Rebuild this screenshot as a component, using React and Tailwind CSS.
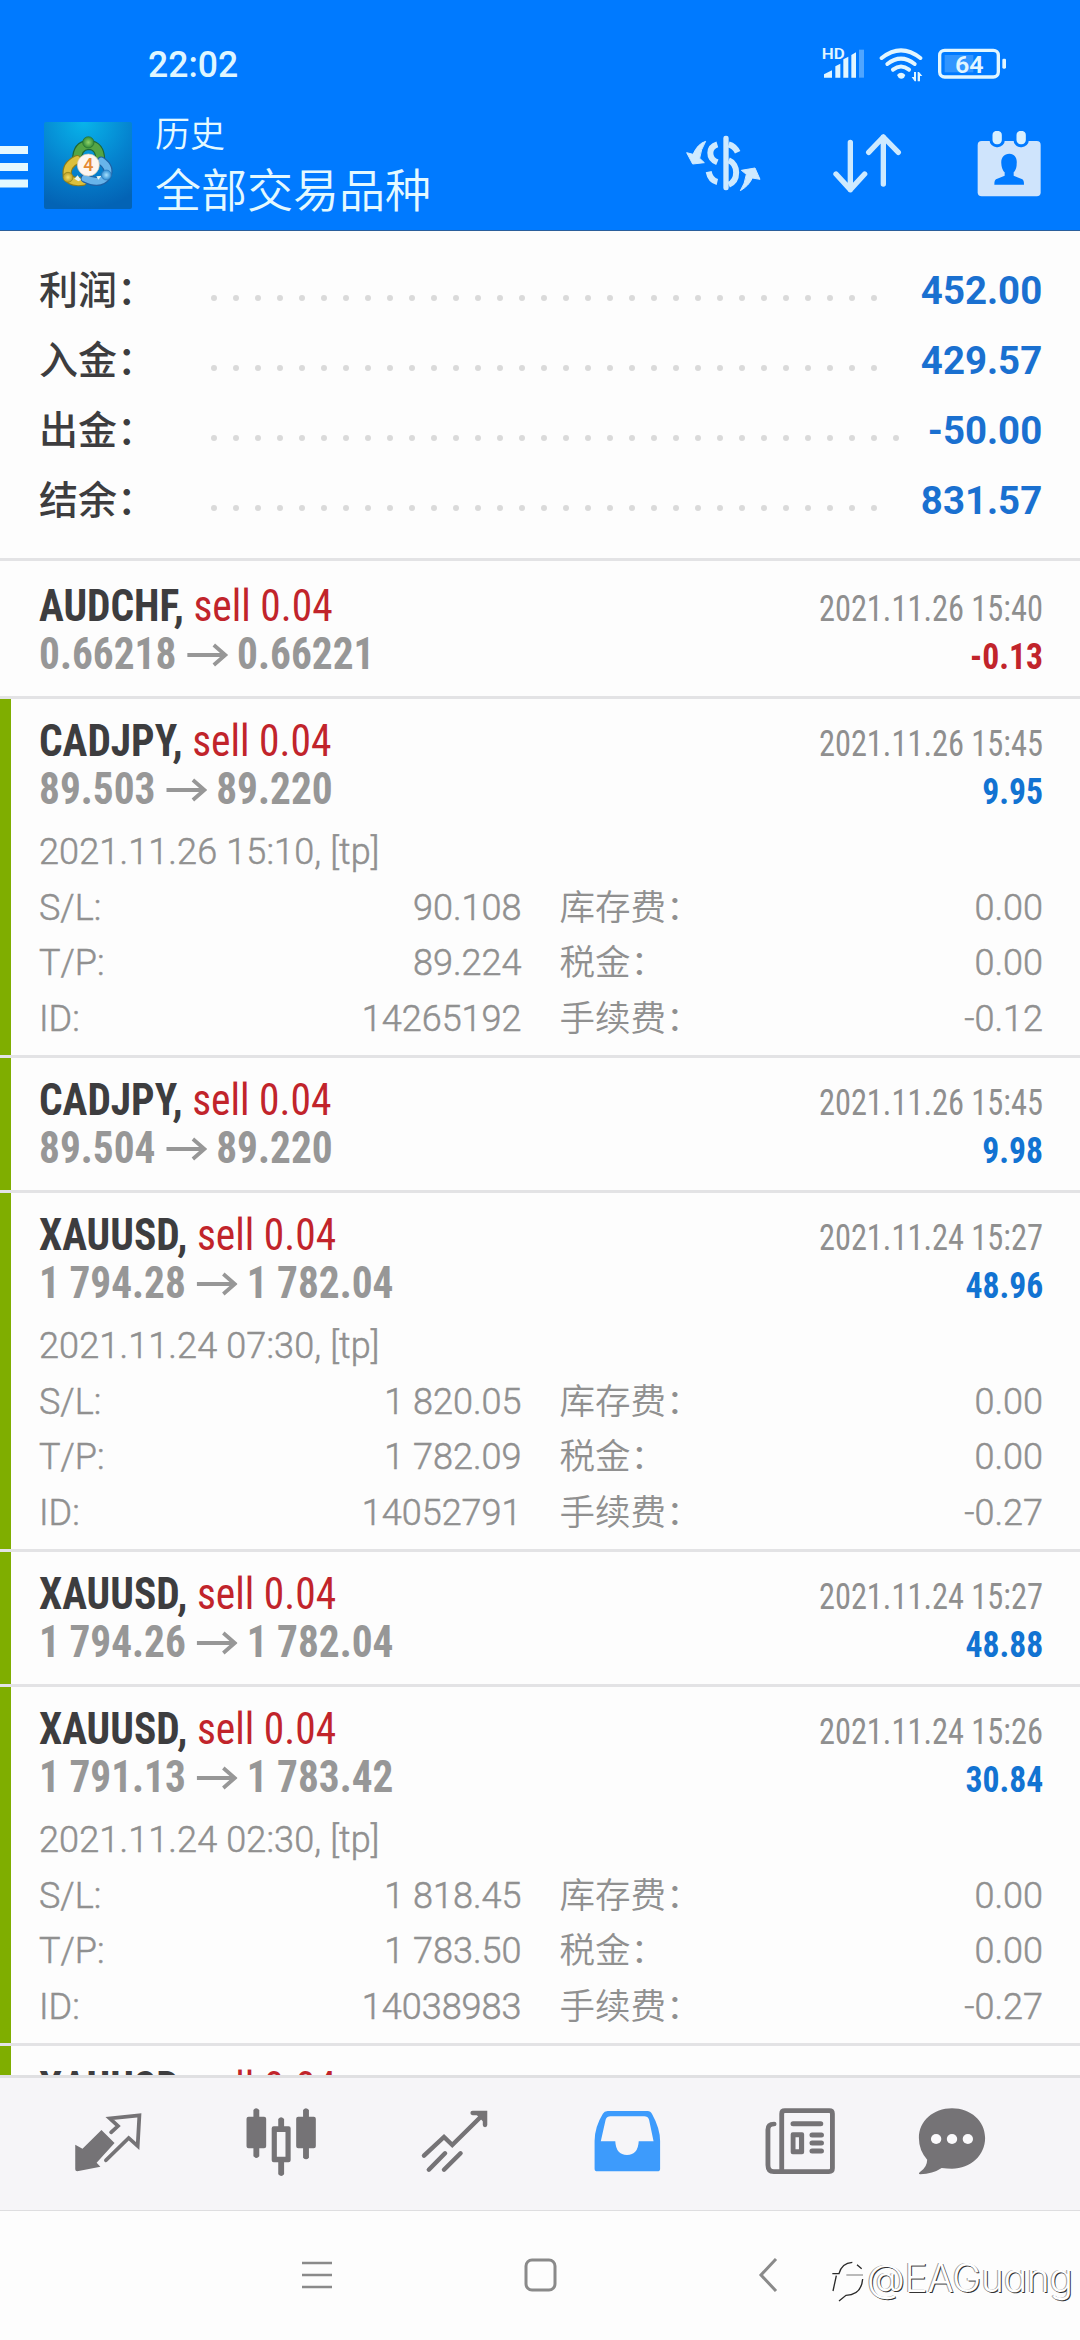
const ink = "#e2f6ff";

const summary = [
  ["利润:", "452.00", 31],
  ["入金:", "429.57", 31],
  ["出金:", "-50.00", 32],
  ["结余:", "831.57", 31],
];

const deals = [
  { symbol: "AUDCHF", from: "0.66218", to: "0.66221", time: "2021.11.26 15:40", profit: "-0.13", first: true },
  {
    symbol: "CADJPY", from: "89.503", to: "89.220", time: "2021.11.26 15:45", profit: "9.95", tp: true,
    open: "2021.11.26 15:10, [tp]", sl: "90.108", tpPrice: "89.224", id: "14265192", fee: "-0.12",
  },
  { symbol: "CADJPY", from: "89.504", to: "89.220", time: "2021.11.26 15:45", profit: "9.98", tp: true },
  {
    symbol: "XAUUSD", from: "1 794.28", to: "1 782.04", time: "2021.11.24 15:27", profit: "48.96", tp: true,
    open: "2021.11.24 07:30, [tp]", sl: "1 820.05", tpPrice: "1 782.09", id: "14052791", fee: "-0.27",
  },
  { symbol: "XAUUSD", from: "1 794.26", to: "1 782.04", time: "2021.11.24 15:27", profit: "48.88", tp: true },
  {
    symbol: "XAUUSD", from: "1 791.13", to: "1 783.42", time: "2021.11.24 15:26", profit: "30.84", tp: true,
    open: "2021.11.24 02:30, [tp]", sl: "1 818.45", tpPrice: "1 783.50", id: "14038983", fee: "-0.27",
  },
  { symbol: "XAUUSD", cut: true, tp: true },
];

function StatusIcons() {
  return (
    <svg width="190" height="40" viewBox="480 130 570 120" fill={ink}>
      <text x="485" y="178" fontSize="46" fontWeight="600" fontFamily="Roboto, sans-serif" textLength="69" lengthAdjust="spacingAndGlyphs">HD</text>
      <path d="M492 234v-10l24-12v22zM526 234v-34l15-8v42zM550 234v-55l15-8v63zM574 234v-68l14-8v76z" />
      <path d="M597 150h15v84h-15z" opacity=".35" />
      <g fill="none" stroke={ink} strokeWidth="12" strokeLinecap="round">
        <path d="M665 175q58-46 116 0" />
        <path d="M682 193q41-32 82 0" />
        <path d="M699 210q24-19 48 0" />
      </g>
      <path d="M711 226q12-14 25 0l-4 8q-8 6-16 0z" />
      <path d="M762 217h6v28h-4l-9-13h7zM773 245v-28h4l10 12h-7v16z" />
      <rect x="839" y="152" width="176" height="80" rx="15" fill="none" stroke={ink} strokeWidth="10" />
      <path d="M854 166h86v52h-86z" fill="#6db6ff" opacity=".45" />
      <rect x="1027" y="177" width="11" height="30" rx="4" />
      <text x="885" y="219" fontSize="71" fontWeight="600" fontFamily="Roboto, sans-serif" textLength="86" lengthAdjust="spacingAndGlyphs">64</text>
    </svg>
  );
}

function Logo() {
  return (
    <svg className="ml-4 mt-[26px]" width="88" height="87" viewBox="131 35 264 261">
      <defs>
        <radialGradient id="tile" cx=".45" cy="0" r="1">
          <stop offset="0" stopColor="#08b4ea" />
          <stop offset=".55" stopColor="#0583cf" />
          <stop offset="1" stopColor="#0363b5" />
        </radialGradient>
        <radialGradient id="green"><stop offset="0" stopColor="#8fd36a" /><stop offset="1" stopColor="#2f8a36" /></radialGradient>
        <radialGradient id="gold"><stop offset="0" stopColor="#f3e26a" /><stop offset="1" stopColor="#b99a20" /></radialGradient>
        <radialGradient id="sky"><stop offset="0" stopColor="#a6e0ff" /><stop offset="1" stopColor="#2f8ed2" /></radialGradient>
      </defs>
      <rect x="131" y="35" width="264" height="261" rx="6" fill="url(#tile)" />
      <g fill="none" strokeLinecap="round">
        <path d="M230 150q0-44 34-46 36 0 36 48" stroke="#1e6634" strokeWidth="30" />
        <path d="M230 150q0-44 34-46 36 0 36 48" stroke="#55a544" strokeWidth="23" />
        <path d="M230 148q-34 16-29 48 8 22 46 17" stroke="#8a7c1c" strokeWidth="28" />
        <path d="M230 148q-34 16-29 48 8 22 46 17" stroke="#dcc03c" strokeWidth="21" />
        <path d="M303 152q28 20 17 44-20 30-66 8" stroke="#1f62a5" strokeWidth="27" />
        <path d="M303 152q28 20 17 44-20 30-66 8" stroke="#68b4ea" strokeWidth="20" />
      </g>
      <path d="M222 205l10-10 10 14-8 4zM288 198l16-2-10 12z" fill="#e9f5f0" />
      <circle cx="264" cy="96" r="17" fill="url(#green)" stroke="#226b34" strokeWidth="2" />
      <circle cx="203" cy="201" r="15" fill="url(#gold)" stroke="#88801c" strokeWidth="2" />
      <circle cx="318" cy="194" r="15" fill="url(#sky)" stroke="#2b76b8" strokeWidth="2" />
      <circle cx="264" cy="164" r="33" fill="#fdf6f0" stroke="#d8c8b0" strokeWidth="2" />
      <text x="264" y="183" fontSize="54" textAnchor="middle" fill="#e58a34" fontWeight="500" fontFamily="Roboto, sans-serif">4</text>
    </svg>
  );
}

function DollarIcon() {
  return (
    <svg width="75" height="60" viewBox="15 70 225 180" fill="#cfeaff">
      <rect x="127" y="78" width="16" height="164" rx="7" />
      <g fill="none" stroke="#cfeaff" strokeWidth="18">
        <path d="M109 104C82 112 80 146 109 158" />
        <path d="M143 104q18 5 27 24" />
        <path d="M143 152c30 12 30 60 0 73" />
        <path d="M83 186q5 26 26 31" />
      </g>
      <path d="M74 95Q50 102 36 134L17 129L35 163L70 159L56 146Q59 120 74 95ZM178 243Q204 228 214 205L237 209L222 175L181 182L196 194Q192 222 178 243Z" stroke="#cfeaff" strokeWidth="3" />
    </svg>
  );
}

function SortIcon() {
  return (
    <svg width="70" height="60" viewBox="511 403 210 180" fill="none" stroke="#cdeaff" strokeWidth="16" strokeLinecap="round" strokeLinejoin="round">
      <path d="M566 431v142M523 526l43 47 43-47M665 556V415M621 461l44-46 45 46" />
    </svg>
  );
}

function CalendarIcon() {
  return (
    <svg width="64" height="66" viewBox="948 394 192 198">
      <rect x="950" y="424" width="189" height="166" rx="12" fill="#cfe4fc" />
      <g fill="#d8f0ff" stroke="#007aff" strokeWidth="9">
        <rect x="990" y="389" width="37" height="49" rx="17" />
        <rect x="1062" y="389" width="37" height="49" rx="17" />
      </g>
      <path d="M1045 462c17 0 24 14 22 30 0 14-4 20-9 26v10l26 11q5 3 5 16h-89q0-13 5-16l26-11v-10c-5-6-9-12-10-26-2-16 7-30 24-30z" fill="#007aff" />
    </svg>
  );
}

function Arrow() {
  return (
    <svg className="ml-[11px] mr-[10px] inline-block" width="43" height="24" viewBox="0 0 43 24" fill="none" stroke="currentColor" strokeWidth="4">
      <path d="M0 12h40M28 2l12 10-12 10" />
    </svg>
  );
}

function Detail({ left, value, right, amount }) {
  return (
    <div className="flex h-[55.5px]">
      <div className="flex w-[482.5px] justify-between">
        <span>{left}</span>
        <span>{value}</span>
      </div>
      <div className="flex flex-1 justify-between pl-[38px]">
        <span className="text-[35.5px] [-webkit-text-stroke:0px]">{right}：</span>
        <span>{amount}</span>
      </div>
    </div>
  );
}

function Deal({ d }) {
  return (
    <div className="flex border-b-[3px] border-[#e3e3e5]">
      <div className={d.tp ? "w-[11px] shrink-0 bg-[#7fae00]" : "w-[11px] shrink-0"} />
      <div className={d.first ? "flex-1 pb-[17px] pl-7 pr-[37px] pt-[22px]" : d.open ? "flex-1 pb-2 pl-7 pr-[37px] pt-[19px]" : "flex-1 pb-[17px] pl-7 pr-[37px] pt-[19px]"}>
        <div className="flex h-12 items-baseline justify-between font-['Roboto_Condensed','Roboto',sans-serif] leading-[48px]">
          <div className="origin-left scale-x-[0.953] whitespace-pre text-[43.5px]">
            <span className="font-bold text-[#3d3d3f]">{d.symbol},</span>
            <span className="text-[#c1242b]"> sell 0.04</span>
          </div>
          {d.time && <div className="origin-right scale-x-[0.9] text-[36px] text-[#8f8f8f]">{d.time}</div>}
        </div>
        {!d.cut && (
          <div className="flex h-12 items-baseline justify-between font-['Roboto_Condensed','Roboto',sans-serif] font-bold leading-[48px]">
            <div className="flex origin-left scale-x-[0.95] items-center text-[43.5px] text-[#979797]">
              {d.from}
              <Arrow />
              {d.to}
            </div>
            <div className={d.profit[0] === "-" ? "origin-right scale-x-[0.935] text-[36px] text-[#c1242b]" : "origin-right scale-x-[0.935] text-[36px] text-[#1273d2]"}>{d.profit}</div>
          </div>
        )}
        {d.open && (
          <div className="mt-[11px] text-[36px] font-[350] leading-[55.5px] text-[#909090] [-webkit-text-stroke:0.5px_#909090]">
            <div className="tracking-[0.13px]">{d.open}</div>
            <Detail left="S/L:" value={d.sl} right="库存费" amount="0.00" />
            <Detail left="T/P:" value={d.tpPrice} right="税金" amount="0.00" />
            <Detail left="ID:" value={d.id} right="手续费" amount={d.fee} />
          </div>
        )}
      </div>
    </div>
  );
}

function NavIcon({ x, children }) {
  return (
    <div className="flex w-[172.8px] justify-center">
      <svg width="80" height="80" viewBox={`${x - 116} 245 232 240`} preserveAspectRatio="none" fill="#757376" stroke="none">
        {children}
      </svg>
    </div>
  );
}

export default function App() {
  return (
    <div className="flex h-[2340px] w-[1080px] flex-col overflow-hidden bg-[#fdfdfd] font-['Roboto','Noto_Sans_CJK_SC',sans-serif]">
      <header className="h-[231px] shrink-0 border-b border-[#2a5f9c] bg-[#007aff]">
        <div className="flex h-24 justify-between pl-[148px] pr-[70px] pt-[43px]">
          <div className="origin-left scale-x-[0.96] text-[37px] font-medium leading-[43px] text-[#dff6ff]">22:02</div>
          <StatusIcons />
        </div>
        <div className="flex items-start">
          <svg className="mt-[50px]" width="28" height="42" fill="#e4f9ff">
            <path d="M0 0h28v8H0zM0 17h28v8H0zM0 33.500h28v8H0z" />
          </svg>
          <Logo />
          <div className="ml-[23px] mt-[18px] font-['Noto_Sans_CJK_SC',sans-serif] font-[350] text-[#e4f9ff]">
            <div className="text-[35px] leading-9">历史</div>
            <div className="mt-[14px] text-[46px] leading-[46px]">全部交易品种</div>
          </div>
          <div className="ml-auto flex items-start gap-[71px] pr-[39px] pt-[37px]">
            <DollarIcon />
            <SortIcon />
            <div className="-mt-[2px] ml-1">
              <CalendarIcon />
            </div>
          </div>
        </div>
      </header>

      <section className="h-[330px] shrink-0 border-b-[3px] border-[#e3e3e5] pl-[39px] pr-[37.5px] pt-[21px]">
        {summary.map(([label, value, dots]) => (
          <div key={label} className="flex h-[70px] items-baseline text-[39px] leading-[70px]">
            <div className="w-[171.500px] font-['Noto_Sans_CJK_SC',sans-serif] font-medium text-[#3d3d3f]">{label.replace(":", "：")}</div>
            <div className="flex gap-4">
              {Array.from({ length: dots }, (_, i) => (
                <i key={i} className="h-[6px] w-[6px] -translate-y-[3px] rounded-full bg-[#dadada]" />
              ))}
            </div>
            <div className="ml-auto origin-right scale-x-[0.985] font-bold text-[#1a70d0]">{value}</div>
          </div>
        ))}
      </section>

      <main className="min-h-0 flex-1 overflow-hidden">
        {deals.map((d, i) => (
          <Deal key={i} d={d} />
        ))}
      </main>

      <nav className="flex h-[136px] shrink-0 border-b border-t-[3px] border-b-[#dedee0] border-t-[#e0e0e2] bg-[#f6f5f8] pl-[22px] pt-6">
        <NavIcon x={315}>
          <path d="M220 373l21 12 55-56 38 39-52 59 11 12-67 14q-6 0-6-6z" />
          <path d="M324 336l20-19-24-23 86-9-5 92-26-24-66 67" fill="none" stroke="#757376" strokeWidth="11" strokeLinecap="round" />
        </NavIcon>
        <NavIcon x={816}>
          <path d="M736 269q8-10 17 0v20h14q6 0 6 6v83q0 6-6 6h-14v24q-8 10-17 0v-24h-14q-6 0-6-6v-83q0-6 6-6h14zM880 269q8-10 17 0v20h14q6 0 6 6v83q0 6-6 6h-14v28q-8 10-17 0v-28h-14q-6 0-6-6v-83q0-6 6-6h14z" />
          <path fillRule="evenodd" d="M808 296q8-10 17 0v22h13q6 0 6 6v96q0 6-6 6h-13v36q-8 10-17 0v-36h-13q-6 0-6-6v-96q0-6 6-6h13zM804 335v74h25v-74z" />
        </NavIcon>
        <NavIcon x={1318}>
          <path d="M1231 406l58-56 24 24 88-90M1372 278h36v36M1245 448l47-49M1289 448l48-49" fill="none" stroke="#757376" strokeWidth="13" strokeLinecap="round" />
          <path d="M1376 276h34v36z" />
        </NavIcon>
        <NavIcon x={254}>
          <path fillRule="evenodd" fill="#3d9bfc" d="M198 272H314Q322 272 327 282Q350 325 350 362V445Q350 453 342 453H168Q160 453 160 445V362Q160 320 184 280Q188 272 198 272ZM206 288Q196 288 192 298L178 363H220Q222 404 254 404Q286 404 288 363H331L318 298Q314 288 304 288Z" />
        </NavIcon>
        <NavIcon x={758}>
          <path d="M683 311q-18 0-18 17v106q0 20 17 20h160q10 0 10-10V280q0-9-9-9H714q-9 0-9 9v170" fill="none" stroke="#757376" strokeWidth="14" strokeLinecap="round" />
          <g fill="none" stroke="#757376" strokeWidth="15" strokeLinecap="round">
            <path d="M738 310h80M793 344h27M793 368h27M793 392h27" />
          </g>
          <path fillRule="evenodd" d="M737 336h27q6 0 6 6v54q0 6-6 6h-27q-6 0-6-6v-54q0-6 6-6zM745 351v36h10v-36z" />
        </NavIcon>
        <div className="-ml-[20px] -mr-[20px]">
          <NavIcon x={1199}>
            <path d="M1199 264c54 0 96 38 96 89 0 52-42 92-96 92q-14 0-30-2-26 18-62 19-8-2 0-8 20-14 20-36-24-28-24-65c0-51 42-89 96-89z" />
            <g fill="#fbfafc">
              <circle cx="1153" cy="356" r="15" />
              <circle cx="1199" cy="356" r="15" />
              <circle cx="1245" cy="356" r="15" />
            </g>
          </NavIcon>
        </div>
      </nav>

      <footer className="flex h-[129px] shrink-0 items-start pl-[302px] pt-[47px]">
        <svg width="30" height="34" fill="none" stroke="#8a8a8a" strokeWidth="2.500">
          <path d="M0 5h30M0 17h30M0 29h30" />
        </svg>
        <svg className="ml-[192px]" width="33" height="34" fill="none" stroke="#8a8a8a" strokeWidth="3">
          <rect x="2" y="2" width="29" height="30" rx="6" />
        </svg>
        <svg className="ml-[201px]" width="20" height="34" fill="none" stroke="#8a8a8a" strokeWidth="3">
          <path d="M18 1L3 17l15 16" />
        </svg>
        <div className="ml-[53px] flex items-start">
          <svg className="mt-[2px]" width="34" height="44" viewBox="34 65 102 132" fill="none" stroke="#2a2a2a" strokeWidth="4">
            <path d="M98 72Q66 74 58 106H38M50 112L40 158M112 79l14 12M129 122q-4 48-50 49l-21 17" />
            <path d="M80 110h50" stroke="#999" />
          </svg>
          <span className="-mt-[4px] ml-[2px] whitespace-nowrap font-['Inter',sans-serif] text-[39px] font-light leading-[48px] tracking-[-0.3px] text-white [font-feature-settings:'cv11'] [text-shadow:1px_1px_0px_#333,-1px_0px_0px_#999]">@EAGuang</span>
        </div>
      </footer>
    </div>
  );
}
